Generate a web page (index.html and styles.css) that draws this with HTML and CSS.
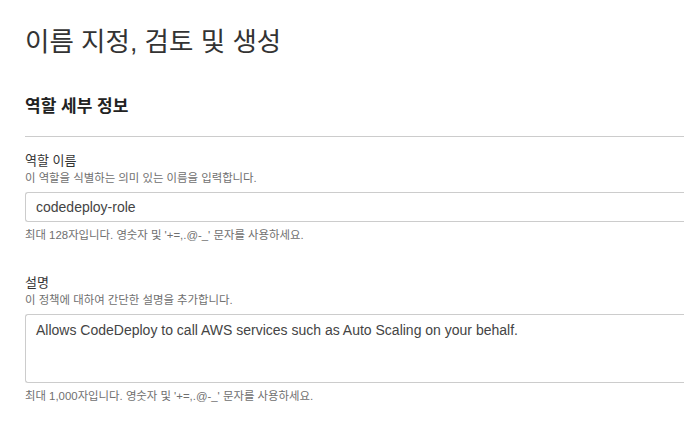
FILE: index.html
```html
<!DOCTYPE html>
<html lang="ko">
<head>
<meta charset="utf-8">
<title>이름 지정, 검토 및 생성</title>
<link rel="stylesheet" href="styles.css">
</head>
<body>
<main class="page">
  <h1 class="title">이름 지정, 검토 및 생성</h1>
  <section class="panel">
    <h2 class="panel-title">역할 세부 정보</h2>
    <div class="field">
      <label class="label" for="role-name">역할 이름</label>
      <div class="desc">이 역할을 식별하는 의미 있는 이름을 입력합니다.</div>
      <input class="input" id="role-name" type="text" value="codedeploy-role">
      <div class="hint">최대 128자입니다. 영숫자 및 '+=,.@-_' 문자를 사용하세요.</div>
    </div>
    <div class="field field-second">
      <label class="label" for="role-desc">설명</label>
      <div class="desc">이 정책에 대하여 간단한 설명을 추가합니다.</div>
      <textarea class="textarea" id="role-desc">Allows CodeDeploy to call AWS services such as Auto Scaling on your behalf.</textarea>
      <div class="hint hint-second">최대 1,000자입니다. 영숫자 및 '+=,.@-_' 문자를 사용하세요.</div>
    </div>
  </section>
</main>
</body>
</html>
```
FILE: styles.css
```css
html, body {
  margin: 0;
  padding: 0;
  background: #ffffff;
  overflow: hidden;
}
body {
  font-family: "Liberation Sans", "Noto Sans CJK KR", sans-serif;
  color: #333333;
}
.page {
  padding-left: 25px;
}
.title {
  margin: 27px 0 0 0;
  font-size: 26.5px;
  line-height: 30px;
  font-weight: 400;
  color: #333333;
}
.panel {
  margin-top: 40px;
}
.panel-title {
  margin: 0;
  font-size: 17px;
  line-height: 20px;
  font-weight: 700;
  color: #222222;
  padding-bottom: 19px;
  border-bottom: 1px solid #cccccc;
}
.field {
  display: flex;
  flex-direction: column;
  padding-top: 16px;
}
.field-second {
  padding-top: 33px;
}
.label {
  font-size: 13px;
  line-height: 16px;
  color: #333333;
}
.desc {
  margin-top: 2px;
  font-size: 11.4px;
  line-height: 14px;
  color: #707070;
}
.input, .textarea {
  box-sizing: border-box;
  width: 100%;
  margin: 7px 0 0 0;
  border: 1px solid #cccccc;
  border-right: none;
  border-radius: 3px 0 0 3px;
  font-family: "Liberation Sans", Arial, sans-serif;
  font-size: 14px;
  color: #444444;
  background: #ffffff;
  outline: none;
}
.input {
  height: 30px;
  padding: 0 10px;
  line-height: 28px;
}
.textarea {
  display: block;
  height: 69px;
  padding: 5px 10px;
  line-height: 20px;
  resize: none;
  overflow: hidden;
}
.hint {
  margin-top: 6px;
  font-size: 11.4px;
  line-height: 14px;
  color: #707070;
}
.hint-second {
  margin-top: 6px;
}
```
